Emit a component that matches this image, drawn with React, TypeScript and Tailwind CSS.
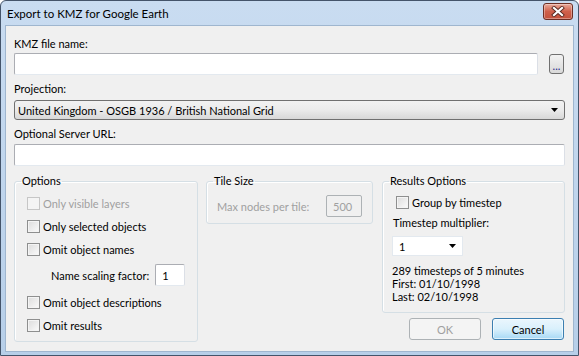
const font = { fontFamily: 'Lato, "Liberation Sans", sans-serif' };

function Checkbox({ label, disabled }: { label: string; disabled?: boolean }) {
  return (
    <label className="flex items-center gap-[3px] h-[15px] whitespace-nowrap">
      <span
        className={
          disabled
            ? 'w-[13px] h-[13px] border border-[#c6c6c6] bg-[#f4f4f4]'
            : 'w-[13px] h-[13px] border border-[#8e8f8f] bg-gradient-to-br from-[#dcdcdc] to-[#fbfbfb] shadow-[inset_0_0_0_1px_#f4f4f4]'
        }
      />
      <span className={disabled ? 'text-[#a0a0a0]' : 'text-black'}>{label}</span>
    </label>
  );
}

function Group({ title, className, children }: { title: string; className: string; children?: React.ReactNode }) {
  return (
    <fieldset className={`min-w-0 shrink-0 border border-[#d5dfe5] rounded-[3px] shadow-[inset_1px_1px_0_#fff] ${className}`}>
      <legend className="ml-[6px] px-[1px] leading-[14px]">{title}</legend>
      {children}
    </fieldset>
  );
}

const textInput = 'bg-white border border-[#abadb3] border-b-[#e3e9ef] border-r-[#dbdfe6] rounded-[2px]';

export default function App() {
  return (
    <div className="w-[579px] h-[356px] text-[11px] leading-[15px] text-black" style={font}>
      <div className="w-full h-full flex flex-col border border-[#44546a] bg-gradient-to-b from-[#c9dcf1] to-[#b7cfe9] rounded-t-[6px]">
        {/* title bar */}
        <div className="h-[24px] flex items-center justify-between pl-[6px] pr-[5px]">
          <span className="text-[11.5px] text-black">Export to KMZ for Google Earth</span>
          <button className="w-[30px] h-[17px] -mt-[3px] rounded-[3px] border border-[#6d2e24] bg-gradient-to-b from-[#e9a99b] via-[#cf604b] to-[#c4513c] flex items-center justify-center shadow-[inset_0_0_0_1px_rgba(255,255,255,0.35)]">
            <svg width="14" height="11" viewBox="0 0 14 11">
              <path d="M3 2 L11 9 M11 2 L3 9" stroke="#5a2a22" strokeWidth="4" strokeLinecap="square" />
              <path d="M3 2 L11 9 M11 2 L3 9" stroke="#fff" strokeWidth="2.2" strokeLinecap="square" />
            </svg>
          </button>
        </div>

        {/* client area */}
        <div className="flex-1 mx-[4px] mb-[3px] bg-[#f0f0f0] border border-[#9fb6cf] pl-[8px] pr-[8px] pt-[10px] flex flex-col">
          <div>KMZ file name:</div>
          <div className="flex items-center gap-[11px] mt-[2px]">
            <div className={`flex-1 h-[22px] ${textInput}`} />
            <button className="w-[15px] h-[20px] mr-[1px] rounded-[3px] border border-[#707070] bg-gradient-to-b from-[#f2f2f2] to-[#d9d9d9] text-[#2a2a8a] leading-[10px] text-[11px] pt-[4px]">
              ...
            </button>
          </div>

          <div className="mt-[6px]">Projection:</div>
          <div className="mt-[4px] h-[20px] rounded-[3px] border border-[#707070] bg-gradient-to-b from-[#f2f2f2] via-[#ebebeb] to-[#d8d8d8] flex items-center justify-between pl-[3px] pr-[6px]">
            <span>United Kingdom - OSGB 1936 / British National Grid</span>
            <svg width="7" height="4" viewBox="0 0 7 4">
              <path d="M0 0 H7 L3.5 4 Z" fill="#000" />
            </svg>
          </div>

          <div className="mt-[6px]">Optional Server URL:</div>
          <div className={`mt-[3px] h-[22px] ${textInput}`} />

          <div className="flex mt-[8px] gap-[8px]">
            <Group title="Options" className="w-[184px] h-[168px]">
              <div className="px-[12px] pt-[8px]">
                <div className="flex flex-col gap-[8px]">
                  <Checkbox label="Only visible layers" disabled />
                  <Checkbox label="Only selected objects" />
                  <Checkbox label="Omit object names" />
                </div>
                <div className="flex items-center mt-[7px] ml-[24px] whitespace-nowrap">
                  <span>Name scaling factor:</span>
                  <div className={`ml-[6px] w-[36px] h-[22px] pl-[6px] flex items-center ${textInput}`}>1</div>
                </div>
                <div className="flex flex-col gap-[8px] mt-[9px]">
                  <Checkbox label="Omit object descriptions" />
                  <Checkbox label="Omit results" />
                </div>
              </div>
            </Group>

            <div className="flex-1 flex flex-col">
              <div className="flex gap-[9px]">
                <Group title="Tile Size" className="w-[167px] h-[50px]">
                  <div className="px-[10px] pt-[7px] flex items-center justify-between text-[#a0a0a0] whitespace-nowrap">
                    <span>Max nodes per tile:</span>
                    <div className="w-[36px] h-[22px] border border-[#adb2b5] rounded-[2px] flex items-center pl-[6px]">500</div>
                  </div>
                </Group>
                <Group title="Results Options" className="w-[183px] h-[139px]">
                  <div className="pl-[9px] pt-[7px]">
                    <div className="ml-[4px]">
                      <Checkbox label="Group by timestep" />
                    </div>
                    <div className="mt-[5px] ml-[1px]">Timestep multiplier:</div>
                    <div className="mt-[6px] w-[71px] h-[20px] bg-white border border-[#e3e9ef] flex items-center justify-between pl-[6px] pr-[6px]">
                      <span>1</span>
                      <svg width="7" height="4" viewBox="0 0 7 4">
                        <path d="M0 0 H7 L3.5 4 Z" fill="#000" />
                      </svg>
                    </div>
                    <div className="mt-[8px] leading-[13px]">
                      <div>289 timesteps of 5 minutes</div>
                      <div>First: 01/10/1998</div>
                      <div>Last: 02/10/1998</div>
                    </div>
                  </div>
                </Group>
              </div>
              <div className="flex justify-end gap-[11px] mt-[5px] mr-[1px]">
                <button className="w-[72px] h-[22px] rounded-[3px] border border-[#adb2b5] bg-[#f4f4f4] text-[#a0a0a0]">OK</button>
                <button className="w-[72px] h-[22px] rounded-[3px] border border-[#3c7fb1] bg-gradient-to-b from-[#eaf6fd] via-[#d9f0fc] to-[#a7d9f5] shadow-[inset_0_0_0_1px_rgba(255,255,255,0.6)]">
                  Cancel
                </button>
              </div>
            </div>
          </div>
        </div>
      </div>
    </div>
  );
}
